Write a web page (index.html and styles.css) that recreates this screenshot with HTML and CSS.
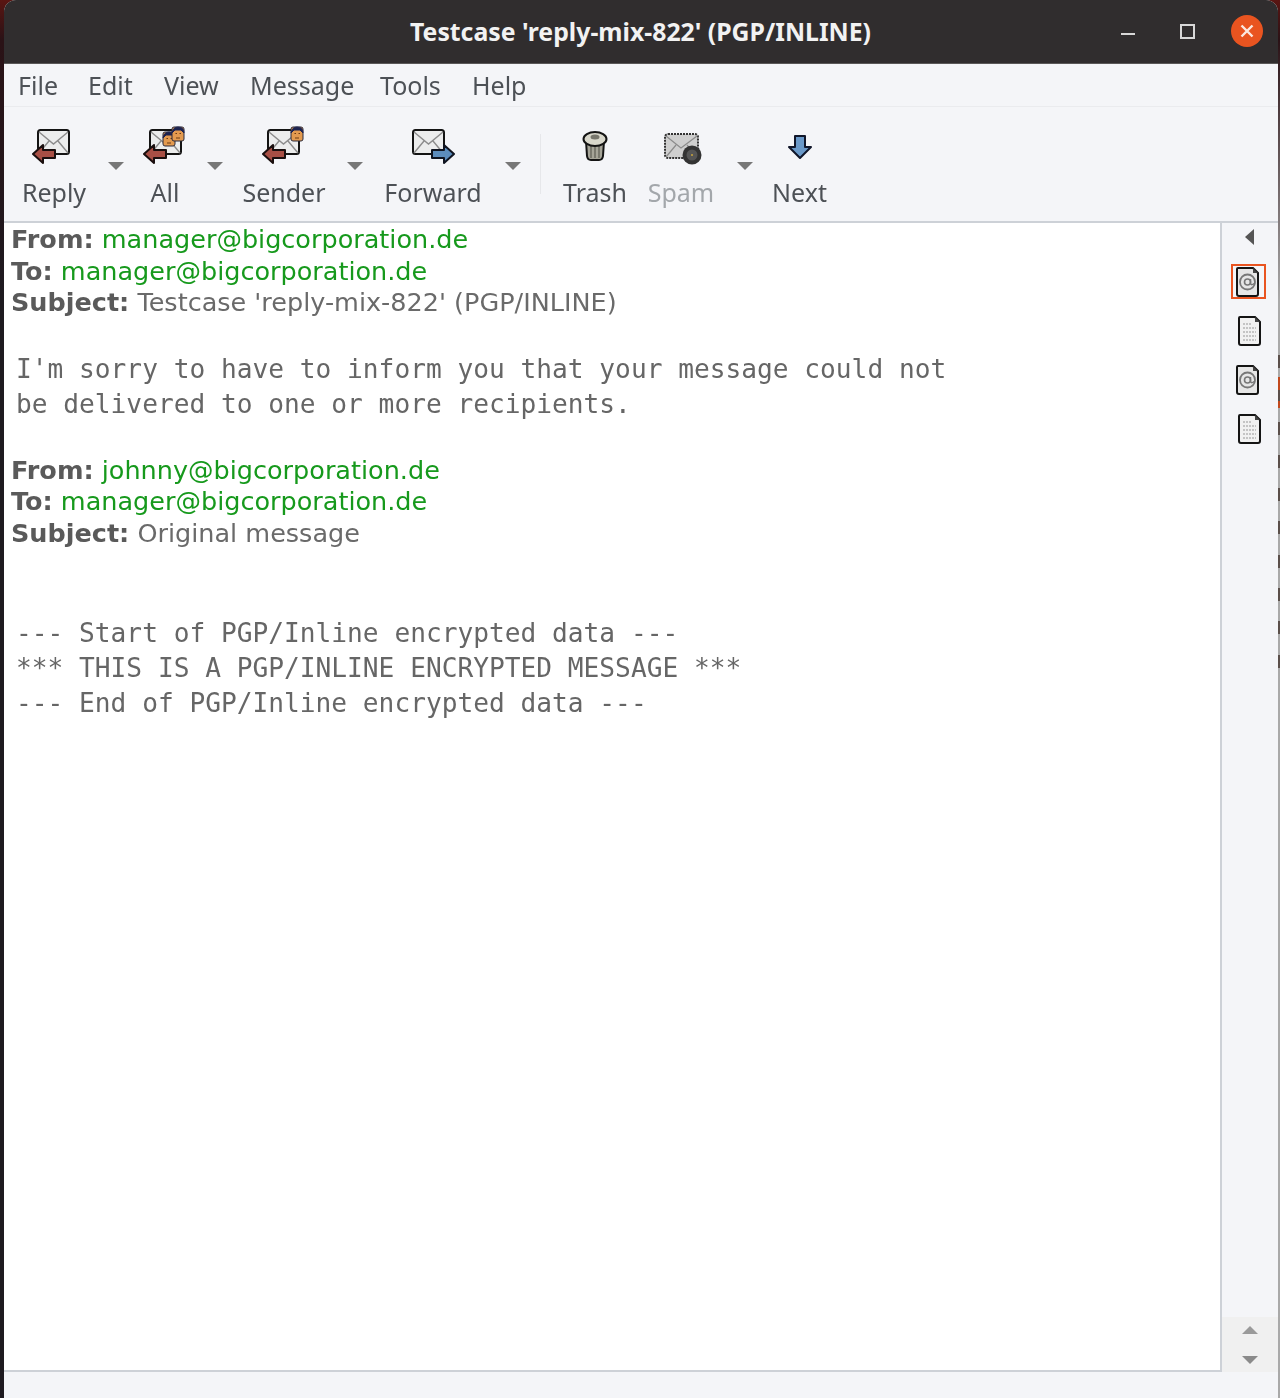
FILE: index.html
```html
<!DOCTYPE html>
<html>
<head>
<meta charset="UTF-8">
<title>Testcase 'reply-mix-822' (PGP/INLINE)</title>
<link rel="stylesheet" href="styles.css">
</head>
<body>
<svg class="defs" width="0" height="0">
	<defs>
		<g id="env">
			<rect x="1" y="1" width="31" height="24" rx="2.5" fill="#eceded" stroke="#141414" stroke-width="2"/>
			<path d="M2 3 L16.5 15 L31 3 M2 24 L12 12 M31 24 L21 12" fill="none" stroke="#8c8c8c" stroke-width="1.4"/>
		</g>
		<path id="arrowLeft" d="M0 9 L10 0 L10 5 L22 5 L22 13 L10 13 L10 18 Z" fill="#a84f45" stroke="#1a0f0f" stroke-width="2" stroke-linejoin="round"/>
		<path id="arrowRight" d="M22 9 L12 0 L12 5 L0 5 L0 13 L12 13 L12 18 Z" fill="#5c8dbd" stroke="#0f1420" stroke-width="2" stroke-linejoin="round"/>
		<g id="face">
			<rect x="0" y="0" width="12" height="14" rx="2" fill="#e39a4f" stroke="#2a2a3c"/>
			<path d="M0 6 Q1 0 6 0 Q12 0 12 6 L9 3 L3 3 Z" fill="#1c2350" stroke="#1c2350"/>
			<path d="M3.5 6.5 h1.5 M7.5 6.5 h1.5 M4 11 h4" stroke="#6b3a12" stroke-width="1"/>
		</g>
		<g id="docAt">
			<path d="M2 1 H17 L22 6 V27 Q22 29 20 29 H3 Q1 29 1 27 V2 Q1 1 2 1 Z" fill="#e6e6e6" stroke="#141414" stroke-width="2"/>
			<path d="M17 1 V6 H22 Z" fill="#444"/>
			<circle cx="11.5" cy="15" r="7.5" fill="none" stroke="#777" stroke-width="1.8"/>
			<circle cx="11.5" cy="15" r="3" fill="none" stroke="#777" stroke-width="1.6"/>
			<path d="M14.5 12 V16.5 Q15.5 19 19 16" fill="none" stroke="#777" stroke-width="1.5"/>
		</g>
		<g id="docText">
			<path d="M2 1 H17 L22 6 V27 Q22 29 20 29 H3 Q1 29 1 27 V2 Q1 1 2 1 Z" fill="#f1f1f1" stroke="#141414" stroke-width="2"/>
			<path d="M17 1 V6 H22 Z" fill="#444"/>
			<path d="M5 8 H14 M5 12 H18 M5 16 H18 M5 20 H18 M5 24 H18" stroke="#c4c4c4" stroke-width="2" stroke-dasharray="2 1"/>
		</g>
	</defs>
</svg>

<div class="window">
	<div class="titlebar">
		<span class="title">Testcase 'reply-mix-822' (PGP/INLINE)</span>
		<div class="wincontrols">
			<span class="minimize"></span>
			<span class="maximize"></span>
			<span class="close">
				<svg width="14" height="14" viewBox="0 0 14 14"><path d="M1.5 1.5 L12.5 12.5 M12.5 1.5 L1.5 12.5" stroke="#fbe9e0" stroke-width="2.4"/></svg>
			</span>
		</div>
	</div>

	<div class="menubar">
		<span>File</span>
		<span>Edit</span>
		<span>View</span>
		<span>Message</span>
		<span>Tools</span>
		<span>Help</span>
	</div>

	<div class="toolbar">
		<div class="tool w-reply">
			<svg class="icon" width="44" height="40" viewBox="0 0 44 40"><use href="#env" x="5" y="3"/><use href="#arrowLeft" x="1" y="19"/></svg>
			<span>Reply</span>
		</div>
		<div class="drop w-d1"></div>
		<div class="tool w-all">
			<svg class="icon" width="44" height="40" viewBox="0 0 44 40"><use href="#env" x="6" y="3"/><use href="#arrowLeft" x="1" y="19"/><use href="#face" x="20" y="6"/><use href="#face" x="29" y="1"/></svg>
			<span>All</span>
		</div>
		<div class="drop w-d2"></div>
		<div class="tool w-sender">
			<svg class="icon" width="44" height="40" viewBox="0 0 44 40"><use href="#env" x="5" y="3"/><use href="#arrowLeft" x="1" y="19"/><use href="#face" x="29" y="1"/></svg>
			<span>Sender</span>
		</div>
		<div class="drop w-d3"></div>
		<div class="tool w-forward">
			<svg class="icon" width="44" height="40" viewBox="0 0 44 40"><use href="#env" x="1" y="3"/><use href="#arrowRight" x="21" y="19"/></svg>
			<span>Forward</span>
		</div>
		<div class="drop w-d4"></div>
		<div class="separator"></div>
		<div class="tool w-trash">
			<svg class="icon" width="44" height="40" viewBox="0 0 44 40">
				<path d="M13 15 L14 30 Q14.500 34 18 34 H26 Q29.500 34 30 30 L31 15 Z" fill="#a5a498" stroke="#141414" stroke-width="2"/>
				<path d="M18 19 V32 M22 19 V32 M26 19 V32" stroke="#6f6e64" stroke-width="1.6"/>
				<ellipse cx="22" cy="13" rx="11.500" ry="7" fill="#d8d7cb" stroke="#141414" stroke-width="2"/>
				<ellipse cx="22" cy="11" rx="4.500" ry="2.500" fill="#77766c"/>
			</svg>
			<span>Trash</span>
		</div>
		<div class="tool w-spam">
			<svg class="icon" width="44" height="40" viewBox="0 0 44 40">
				<rect x="6" y="8" width="33" height="24" rx="3" fill="#cfcfcf" stroke="#333" stroke-width="2" stroke-dasharray="2 1"/>
				<path d="M7 10 L22 22 L38 10 M7 31 L17 19 M38 31 L28 19" fill="none" stroke="#8c8c8c" stroke-width="1.2"/>
				<circle cx="33" cy="29" r="9.500" fill="#333"/>
				<circle cx="33" cy="29" r="5.500" fill="#555"/>
				<circle cx="33" cy="29" r="1" fill="#c9a43c"/>
			</svg>
			<span class="disabled">Spam</span>
		</div>
		<div class="drop w-d5"></div>
		<div class="tool w-next">
			<svg class="icon" width="44" height="40" viewBox="0 0 44 40">
				<path d="M22 32 L33 21 L27 21 L27 10 L17 10 L17 21 L11 21 Z" fill="#6a99c9" stroke="#10162a" stroke-width="2" stroke-linejoin="round"/>
			</svg>
			<span>Next</span>
		</div>
	</div>

	<div class="main">
		<div class="message">
			<div class="headers">
				<div><b>From:</b> <a>manager@bigcorporation.de</a></div>
				<div><b>To:</b> <a>manager@bigcorporation.de</a></div>
				<div><b>Subject:</b> Testcase 'reply-mix-822' (PGP/INLINE)</div>
			</div>
			<pre class="body">I'm sorry to have to inform you that your message could not
be delivered to one or more recipients.</pre>
			<div class="headers">
				<div><b>From:</b> <a>johnny@bigcorporation.de</a></div>
				<div><b>To:</b> <a>manager@bigcorporation.de</a></div>
				<div><b>Subject:</b> Original message</div>
			</div>
			<pre class="body encrypted">--- Start of PGP/Inline encrypted data ---
*** THIS IS A PGP/INLINE ENCRYPTED MESSAGE ***
--- End of PGP/Inline encrypted data ---</pre>
		</div>

		<div class="sidebar">
			<div class="parts">
				<span class="collapse"></span>
				<span class="part selected"><svg width="24" height="30" viewBox="0 0 24 30"><use href="#docAt"/></svg></span>
				<span class="part textpart"><svg width="24" height="30" viewBox="0 0 24 30"><use href="#docText"/></svg></span>
				<span class="part"><svg width="24" height="30" viewBox="0 0 24 30"><use href="#docAt"/></svg></span>
				<span class="part textpart"><svg width="24" height="30" viewBox="0 0 24 30"><use href="#docText"/></svg></span>
			</div>
			<div class="scrollbtns">
				<span class="up"></span>
				<span class="down"></span>
			</div>
		</div>
	</div>

	<div class="statusbar"></div>
</div>
</body>
</html>
```

FILE: styles.css
```css
html, body {
	margin: 0;
	height: 100%;
}

/* desktop showing round the window: wallpaper left and top, another window's edge on the right */
body {
	background:
		linear-gradient(#c2491d, #c2491d) right 0 top 377px / 2px 13px no-repeat,
		linear-gradient(#c2491d, #c2491d) right 0 top 401px / 2px 7px no-repeat,
		repeating-linear-gradient(180deg, #5a4f4a 0, #5a4f4a 13px, transparent 13px, transparent 33.3px) right 0 top 355px / 2px 313px no-repeat,
		linear-gradient(180deg, #5a1512 0, #2a1216 40px, rgba(30, 26, 32, 0) 300px) no-repeat,
		linear-gradient(90deg, #1e1a20 640px, #a9a9a9 640px);
	overflow: hidden;
}

.defs {
	display: block;
	height: 0;
}

.window {
	margin-left: 4px;
	width: 1274px;
	height: 1398px;
	display: flex;
	flex-direction: column;
	background: #f4f5f8;
	border-radius: 12px 12px 0 0;
	overflow: hidden;
	filter: blur(0.4px);
}

.titlebar {
	height: 64px;
	background: #302d2e;
	border-bottom: 1px solid #5a5858;
	box-sizing: border-box;
	position: relative;
	display: flex;
	align-items: center;
	justify-content: center;
}

.title {
	color: #f2f2f2;
	font: bold 24.8px "Noto Sans", sans-serif;
	margin-top: -1px;
	margin-left: -1px;
}

.wincontrols {
	position: absolute;
	right: 15px;
	top: 14px;
	display: flex;
	align-items: center;
	height: 34px;
}

.minimize {
	width: 14px;
	height: 2px;
	background: #d8d8d8;
	margin-top: 5px;
	margin-right: 45px;
}

.maximize {
	width: 11px;
	height: 11px;
	border: 2px solid #d8d8d8;
	margin-right: 36px;
}

.close {
	width: 32px;
	height: 32px;
	border-radius: 50%;
	background: #e95420;
	display: flex;
	align-items: center;
	justify-content: center;
}

.menubar {
	height: 43px;
	box-sizing: border-box;
	border-bottom: 1px solid #eaebee;
	padding-left: 14px;
	display: grid;
	grid-template-columns: 70px 76px 86px 130px 92px auto;
	align-items: center;
	font: 25px "Noto Sans", sans-serif;
	color: #4d5156;
}

.toolbar {
	height: 116px;
	box-sizing: border-box;
	border-bottom: 2px solid #cdd1d7;
	display: flex;
	font: 25px "Noto Sans", sans-serif;
	color: #4d5156;
}

.tool {
	display: flex;
	flex-direction: column;
	align-items: center;
	padding-top: 19px;
	line-height: 36px;
}

.tool .icon {
	margin-bottom: 8px;
}

.disabled {
	color: #a3a7ab;
}

.drop {
	display: flex;
	justify-content: center;
	padding-top: 55px;
	box-sizing: border-box;
}

.drop::after {
	content: "";
	width: 0;
	height: 0;
	border-left: 8px solid transparent;
	border-right: 8px solid transparent;
	border-top: 8px solid #777;
}

.separator {
	width: 1px;
	height: 60px;
	margin: 27px 10px 0 10px;
	background: #e6e7ea;
}

.w-reply { width: 100px; }
.w-d1 { width: 24px; }
.w-all { width: 74px; }
.w-d2 { width: 26px; }
.w-sender { width: 112px; }
.w-d3 { width: 30px; }
.w-forward { width: 126px; }
.w-d4 { width: 34px; }
.w-trash { width: 88px; }
.w-spam { width: 84px; }
.w-d5 { width: 44px; }
.w-next { width: 65px; }

.main {
	flex: 1;
	display: flex;
	min-height: 0;
}

.message {
	width: 1218px;
	box-sizing: border-box;
	background: white;
	border-right: 2px solid #cdd1d7;
	border-bottom: 2px solid #cdd1d7;
	padding: 1px 0 0 7px;
}

.headers {
	font: 25.5px/31.5px "DejaVu Sans", sans-serif;
	color: #6a6a6a;
}

.headers b {
	color: #5a5a5a;
}

.headers a {
	color: #16991c;
}

.body {
	margin: 33px 0 33px 5px;
	font: 26.2px/35px "DejaVu Sans Mono", monospace;
	color: #666;
}

.body.encrypted {
	margin-top: 67px;
}

.sidebar {
	flex: 1;
	display: flex;
	flex-direction: column;
	justify-content: space-between;
}

.parts {
	display: flex;
	flex-direction: column;
	align-items: center;
	padding-top: 6px;
	padding-right: 4px;
}

.collapse {
	width: 0;
	height: 0;
	border-top: 8px solid transparent;
	border-bottom: 8px solid transparent;
	border-right: 9px solid #555;
	margin-bottom: 19px;
	margin-left: 2px;
}

.part {
	width: 35px;
	height: 35px;
	box-sizing: border-box;
	border: 2px solid transparent;
	display: flex;
	align-items: center;
	justify-content: center;
	margin-bottom: 14px;
}

.part.textpart {
	padding-left: 4px;
}

.part.selected {
	border-color: #e95420;
}

.scrollbtns {
	height: 55px;
	background: #f0f0f0;
	display: flex;
	flex-direction: column;
	align-items: center;
	gap: 22px;
	padding-top: 9px;
	box-sizing: border-box;
}

.up, .down {
	width: 0;
	height: 0;
	border-left: 8px solid transparent;
	border-right: 8px solid transparent;
}

.up {
	border-bottom: 8px solid #9a9a9a;
}

.down {
	border-top: 8px solid #8a8a8a;
}

.statusbar {
	height: 26px;
}
```
